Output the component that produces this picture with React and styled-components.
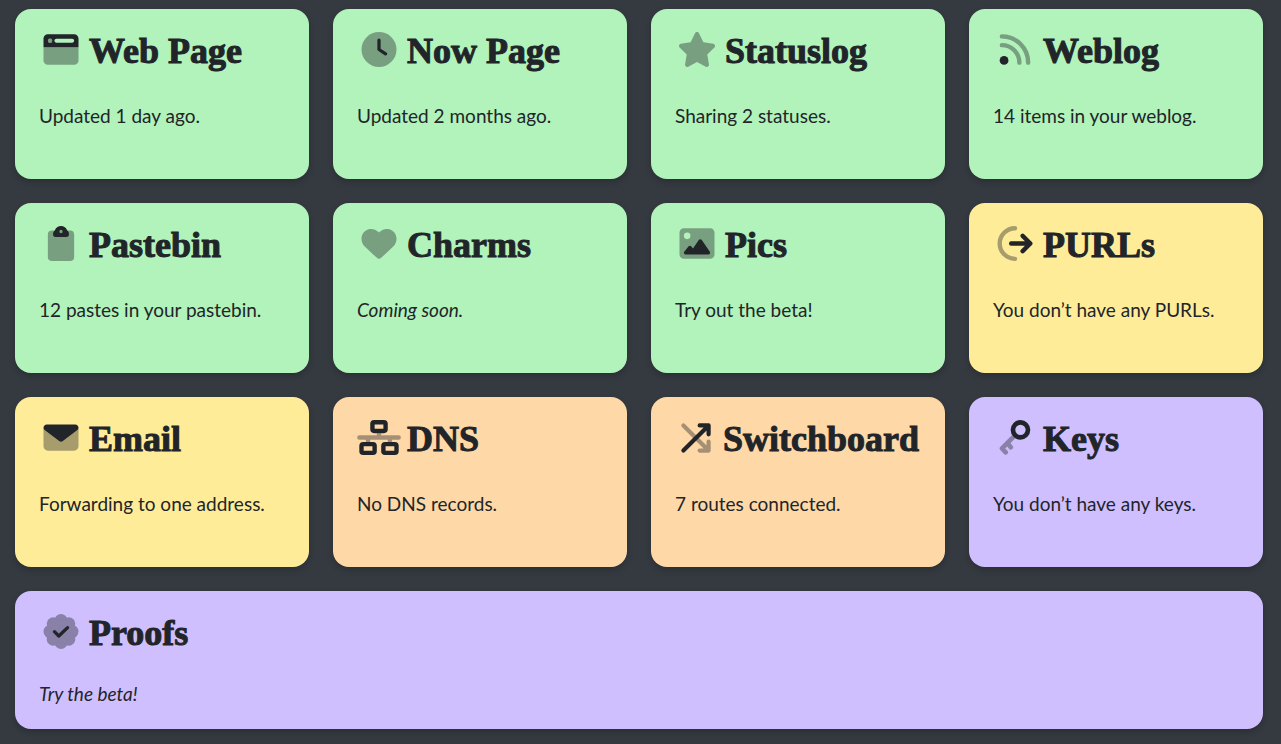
import React from 'react';
import styled, { createGlobalStyle } from 'styled-components';

const COLORS = {
  green: '#b2f2bb',
  yellow: '#ffec99',
  orange: '#ffd8a8',
  violet: '#d0bfff',
};

// Two-tone icons. Each one is drawn on a 640x512 canvas: <Soft> is the faded layer.

const Soft = styled.g`
  opacity: 0.4;
`;

const Lines = styled.g`
  fill: none;
  stroke: currentColor;
  stroke-width: ${({ $w }) => $w || 64};
  stroke-linecap: round;
  stroke-linejoin: round;
`;

const LOBES = [0, 45, 90, 135, 180, 225, 270, 315];

const ICONS = {
  browser: (
    <g transform="translate(64 0)">
      <Soft>
        <path d="M0 224H512V416c0 35.3-28.7 64-64 64H64c-35.3 0-64-28.7-64-64V224z" />
        <circle cx="96" cy="128" r="32" />
      </Soft>
      <path
        fillRule="evenodd"
        d="M64 32H448c35.3 0 64 28.7 64 64V224H0V96C0 60.7 28.7 32 64 32zM96 96a32 32 0 1 0 0 64a32 32 0 1 0 0-64zM188 100c-15.5 0-28 12.5-28 28s12.500 28 28 28H420c15.500 0 28-12.500 28-28s-12.500-28-28-28H188z"
      />
    </g>
  ),
  clock: (
    <g transform="translate(64 0)">
      <Soft><circle cx="256" cy="256" r="256" /></Soft>
      <Lines $w={48}><path d="M256 120V256L352 320" /></Lines>
    </g>
  ),
  star: (
    <g transform="translate(32 0)">
      <Soft>
        <path d="M316.9 18C311.6 7 300.4 0 288.1 0s-23.4 7-28.8 18L195 150.3 51.4 171.5c-12 1.8-22 10.2-25.7 21.7s-.7 24.2 7.9 32.7L137.8 329 113.2 474.7c-2 12 3 24.2 12.9 31.3s23 8 33.8 2.3l128.3-68.5 128.3 68.5c10.8 5.7 23.9 4.9 33.8-2.3s14.9-19.3 12.9-31.3L438.5 329 542.7 225.9c8.6-8.5 11.7-21.2 7.9-32.7s-13.7-19.9-25.7-21.7L381.2 150.3 316.9 18z" />
      </Soft>
    </g>
  ),
  rss: (
    <g transform="translate(96 0)">
      <Soft>
        <Lines>
          <path d="M32 64A384 384 0 0 1 416 448" />
          <path d="M32 192A256 256 0 0 1 288 448" />
        </Lines>
      </Soft>
      <circle cx="64" cy="416" r="64" />
    </g>
  ),
  clipboard: (
    <g transform="translate(128 0)">
      <Soft><rect y="64" width="384" height="448" rx="60" /></Soft>
      <path
        fillRule="evenodd"
        d="M101.500 64C114.600 26.700 150.200 0 192 0s77.400 26.700 90.500 64C298 74 308 92 308 112v16c0 17.700-14.300 32-32 32H108c-17.700 0-32-14.300-32-32V112c0-20 10-38 25.500-48zM192 58a24 24 0 1 0 0 48a24 24 0 1 0 0-48z"
      />
    </g>
  ),
  heart: (
    <g transform="translate(64 0)">
      <Soft>
        <path d="M47.6 300.4L228.3 469.1c7.5 7 17.4 10.9 27.7 10.9s20.2-3.9 27.7-10.9L464.4 300.4c30.4-28.3 47.6-68 47.6-109.5v-5.8c0-69.9-50.5-129.5-119.4-141C347 36.5 300.6 51.4 268 84L256 96 244 84c-32.6-32.6-79-47.5-124.6-39.900C50.500 55.600 0 115.200 0 185.100v5.800c0 41.500 17.200 81.200 47.600 109.500z" />
      </Soft>
    </g>
  ),
  image: (
    <g transform="translate(64 0)">
      <Soft>
        <path
          fillRule="evenodd"
          d="M64 32H448c35.3 0 64 28.7 64 64V416c0 35.3-28.7 64-64 64H64c-35.3 0-64-28.7-64-64V96C0 60.7 28.7 32 64 32zM112 96a48 48 0 1 0 0 96a48 48 0 1 0 0-96z"
        />
      </Soft>
      <path d="M323.8 202.5c-4.5-6.6-11.9-10.5-19.8-10.5s-15.4 3.9-19.8 10.5l-87 127.6L170.7 297c-4.6-5.7-11.5-9-18.7-9s-14.2 3.3-18.7 9l-64 80c-5.8 7.2-6.9 17.1-2.9 25.4s12.4 13.6 21.6 13.6H424c8.9 0 17.1-4.9 21.2-12.8s3.6-17.4-1.4-24.7l-120-176z" />
    </g>
  ),
  redirect: (
    <g transform="translate(64 0)">
      <Soft><Lines><path d="M256 32A224 224 0 0 0 256 480" /></Lines></Soft>
      <Lines><path d="M200 256H480M368 144L480 256L368 368" /></Lines>
    </g>
  ),
  envelope: (
    <g transform="translate(64 0)">
      <Soft>
        <path d="M0 112c0 15.1 7.1 29.3 19.2 38.4L236.8 313.6c11.4 8.5 27 8.5 38.4 0L492.8 150.4c12.1-9.1 19.2-23.3 19.2-38.4V384c0 35.3-28.7 64-64 64H64c-35.3 0-64-28.7-64-64V112z" />
      </Soft>
      <path d="M48 64C21.5 64 0 85.5 0 112c0 15.1 7.1 29.3 19.2 38.4L236.8 313.6c11.4 8.5 27 8.5 38.4 0L492.8 150.4c12.1-9.1 19.2-23.3 19.2-38.4 0-26.5-21.5-48-48-48H48z" />
    </g>
  ),
  network: (
    <g>
      <Soft>
        <path d="M288 192h64v32H608a32 32 0 0 1 0 64H512v32H448V288H192v32H128V288H32a32 32 0 0 1 0-64H288z" />
      </Soft>
      <Lines>
        <rect x="224" y="32" width="192" height="128" rx="24" />
        <rect x="64" y="352" width="192" height="128" rx="24" />
        <rect x="384" y="352" width="192" height="128" rx="24" />
      </Lines>
    </g>
  ),
  cross: (
    <g transform="translate(96 0)">
      <Soft><Lines><path d="M32 64L416 448M280 448H416V312" /></Lines></Soft>
      <Lines><path d="M32 448L416 64M280 64H416V200" /></Lines>
    </g>
  ),
  key: (
    <g transform="translate(96 0)">
      <Soft><Lines $w={68}><path d="M190 258L34 416L88 474M112 336L162 398" /></Lines></Soft>
      <Lines $w={68}><circle cx="304" cy="144" r="110" /></Lines>
    </g>
  ),
  badge: (
    <g transform="translate(64 0)">
      <Soft>
        <circle cx="256" cy="256" r="200" />
        {LOBES.map(a => (
          <circle key={a} cx="256" cy="96" r="96" transform={`rotate(${a} 256 256)`} />
        ))}
      </Soft>
      <Lines $w={48}><path d="M160 258L224 322L352 200" /></Lines>
    </g>
  ),
};

const SERVICES = [
  { icon: 'browser',   title: 'Web Page',    text: 'Updated 1 day ago.',         color: 'green' },
  { icon: 'clock',     title: 'Now Page',    text: 'Updated 2 months ago.',      color: 'green' },
  { icon: 'star',      title: 'Statuslog',   text: 'Sharing 2 statuses.',        color: 'green' },
  { icon: 'rss',       title: 'Weblog',      text: '14 items in your weblog.',   color: 'green' },
  { icon: 'clipboard', title: 'Pastebin',    text: '12 pastes in your pastebin.', color: 'green' },
  { icon: 'heart',     title: 'Charms',      text: 'Coming soon.',               color: 'green', italic: true },
  { icon: 'image',     title: 'Pics',        text: 'Try out the beta!',          color: 'green' },
  { icon: 'redirect',  title: 'PURLs',       text: 'You don’t have any PURLs.',  color: 'yellow' },
  { icon: 'envelope',  title: 'Email',       text: 'Forwarding to one address.', color: 'yellow' },
  { icon: 'network',   title: 'DNS',         text: 'No DNS records.',            color: 'orange' },
  { icon: 'cross',     title: 'Switchboard', text: '7 routes connected.',        color: 'orange', compact: true },
  { icon: 'key',       title: 'Keys',        text: 'You don’t have any keys.',   color: 'violet' },
  { icon: 'badge',     title: 'Proofs',      text: 'Try the beta!',              color: 'violet', italic: true, wide: true },
];

// --- Styled Components ---

const GlobalStyle = createGlobalStyle`
  * { box-sizing: border-box; }

  body {
    margin: 0;
    background: #343a40;
    color: #212529;
    font-family: Lato, sans-serif;
    font-size: 19px;
    line-height: 29px;
  }
`;

const Grid = styled.main`
  display: grid;
  grid-template-columns: repeat(4, minmax(0, 1fr));
  gap: 24px;
  padding: 9px 18px 15px 15px;

  @media (max-width: 1100px) {
    grid-template-columns: repeat(auto-fill, minmax(280px, 1fr));
  }
`;

const Card = styled.a`
  display: flex;
  flex-direction: column;
  gap: ${({ $wide }) => $wide ? '24px' : '28px'};
  grid-column: ${({ $wide }) => $wide ? '1 / -1' : 'auto'};
  padding: 20px 24px;
  border-radius: 16px;
  background: ${({ $color }) => COLORS[$color]};
  box-shadow: 0 3px 6px rgba(0, 0, 0, 0.2);
  color: inherit;
  text-decoration: none;
`;

const Heading = styled.div`
  display: flex;
  align-items: center;
  gap: 6px;
`;

const Icon = styled.svg`
  flex: none;
  width: ${({ $compact }) => $compact ? '42px' : '44px'};
  height: ${({ $compact }) => $compact ? '34px' : '35px'};
  margin-bottom: 3px;
  fill: currentColor;
`;

const Title = styled.h2`
  margin: 0;
  font-family: 'Liberation Serif', serif;
  font-size: 36px;
  font-weight: 700;
  line-height: 44px;
  -webkit-text-stroke: 1px currentColor;
`;

const Text = styled.p`
  margin: 0;
  min-height: ${({ $wide }) => $wide ? '30px' : '58px'};
  font-style: ${({ $italic }) => $italic ? 'italic' : 'normal'};
`;

// --- Component ---

const App = () => (
  <>
    <GlobalStyle />
    <Grid>
      {SERVICES.map(s => (
        <Card key={s.title} href="#" $color={s.color} $wide={s.wide}>
          <Heading>
            <Icon viewBox="0 0 640 512" aria-hidden="true" $compact={s.compact}>
              {ICONS[s.icon]}
            </Icon>
            <Title>{s.title}</Title>
          </Heading>
          <Text $italic={s.italic} $wide={s.wide}>{s.text}</Text>
        </Card>
      ))}
    </Grid>
  </>
);

export default App;
